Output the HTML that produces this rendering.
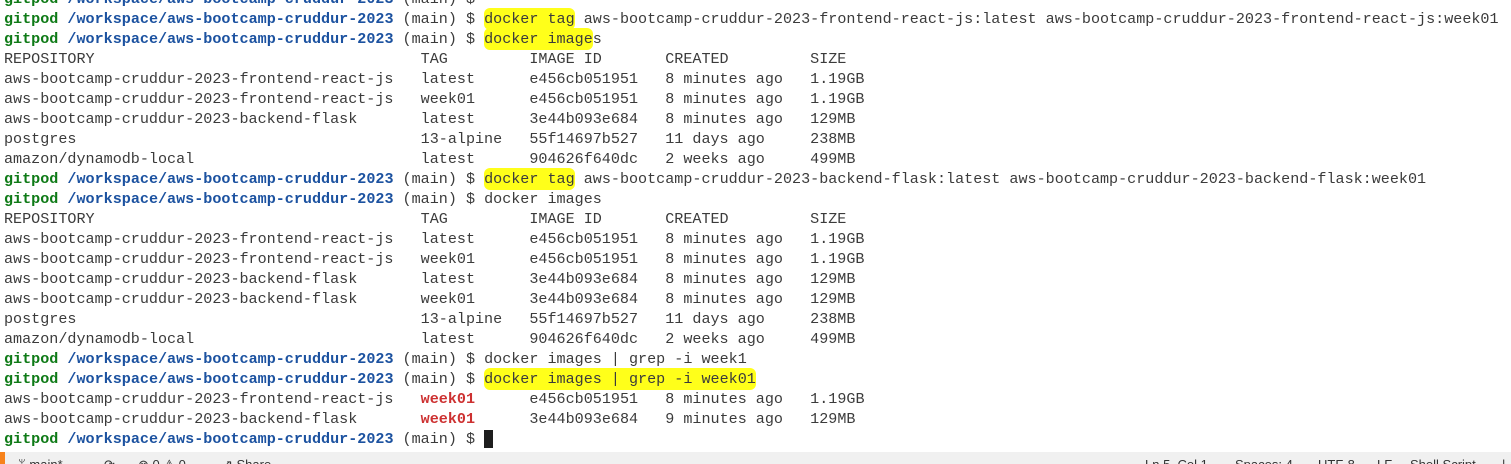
<!DOCTYPE html>
<html><head><meta charset="utf-8"><style>
html,body{margin:0;padding:0;width:1511px;height:464px;overflow:hidden;background:#fff;}
pre{position:absolute;left:4px;top:-11px;margin:0;font-family:"Liberation Mono",monospace;font-size:15.1px;line-height:20px;color:#3b3b3b;white-space:pre;}
.g{color:#0e7a16;font-weight:bold}
.b{color:#1c52a0;font-weight:bold}
.r{color:#cd3131;font-weight:bold}
.h{background:#ffff1a;border-radius:6px;padding:2px 0;}
.sb{position:absolute;left:0;top:452px;width:1511px;height:12px;background:#f0f0f0;font-family:"Liberation Sans",sans-serif;font-size:13px;color:#333;overflow:hidden}
.sb span{position:absolute;top:5px;white-space:pre}
.or{position:absolute;left:0;top:0;width:5px;height:12px;background:#f7821b}
</style></head><body>
<pre><span class="g">gitpod</span> <span class="b">/workspace/aws-bootcamp-cruddur-2023</span> (main) $
<span class="g">gitpod</span> <span class="b">/workspace/aws-bootcamp-cruddur-2023</span> (main) $ <span class="h">docker tag</span> aws-bootcamp-cruddur-2023-frontend-react-js:latest aws-bootcamp-cruddur-2023-frontend-react-js:week01
<span class="g">gitpod</span> <span class="b">/workspace/aws-bootcamp-cruddur-2023</span> (main) $ <span class="h">docker image</span>s
REPOSITORY                                    TAG         IMAGE ID       CREATED         SIZE
aws-bootcamp-cruddur-2023-frontend-react-js   latest      e456cb051951   8 minutes ago   1.19GB
aws-bootcamp-cruddur-2023-frontend-react-js   week01      e456cb051951   8 minutes ago   1.19GB
aws-bootcamp-cruddur-2023-backend-flask       latest      3e44b093e684   8 minutes ago   129MB
postgres                                      13-alpine   55f14697b527   11 days ago     238MB
amazon/dynamodb-local                         latest      904626f640dc   2 weeks ago     499MB
<span class="g">gitpod</span> <span class="b">/workspace/aws-bootcamp-cruddur-2023</span> (main) $ <span class="h">docker tag</span> aws-bootcamp-cruddur-2023-backend-flask:latest aws-bootcamp-cruddur-2023-backend-flask:week01
<span class="g">gitpod</span> <span class="b">/workspace/aws-bootcamp-cruddur-2023</span> (main) $ docker images
REPOSITORY                                    TAG         IMAGE ID       CREATED         SIZE
aws-bootcamp-cruddur-2023-frontend-react-js   latest      e456cb051951   8 minutes ago   1.19GB
aws-bootcamp-cruddur-2023-frontend-react-js   week01      e456cb051951   8 minutes ago   1.19GB
aws-bootcamp-cruddur-2023-backend-flask       latest      3e44b093e684   8 minutes ago   129MB
aws-bootcamp-cruddur-2023-backend-flask       week01      3e44b093e684   8 minutes ago   129MB
postgres                                      13-alpine   55f14697b527   11 days ago     238MB
amazon/dynamodb-local                         latest      904626f640dc   2 weeks ago     499MB
<span class="g">gitpod</span> <span class="b">/workspace/aws-bootcamp-cruddur-2023</span> (main) $ docker images | grep -i week1
<span class="g">gitpod</span> <span class="b">/workspace/aws-bootcamp-cruddur-2023</span> (main) $ <span class="h">docker images | grep -i week01</span>
aws-bootcamp-cruddur-2023-frontend-react-js   <span class="r">week01</span>      e456cb051951   8 minutes ago   1.19GB
aws-bootcamp-cruddur-2023-backend-flask       <span class="r">week01</span>      3e44b093e684   9 minutes ago   129MB
<span class="g">gitpod</span> <span class="b">/workspace/aws-bootcamp-cruddur-2023</span> (main) $ <span style="background:#1e1e1e"> </span></pre>
<div class="sb"><div class="or"></div>
<span style="left:18px">ᛘ main*</span><span style="left:104px">⟳</span><span style="left:138px">⊗ 0 ⚠ 0</span><span style="left:222px">⇗ Share</span>
<span style="left:1145px">Ln 5, Col 1</span><span style="left:1235px">Spaces: 4</span><span style="left:1318px">UTF-8</span><span style="left:1377px">LF</span><span style="left:1410px">Shell Script</span><span style="left:1502px">|</span>
</div>
</body></html>
